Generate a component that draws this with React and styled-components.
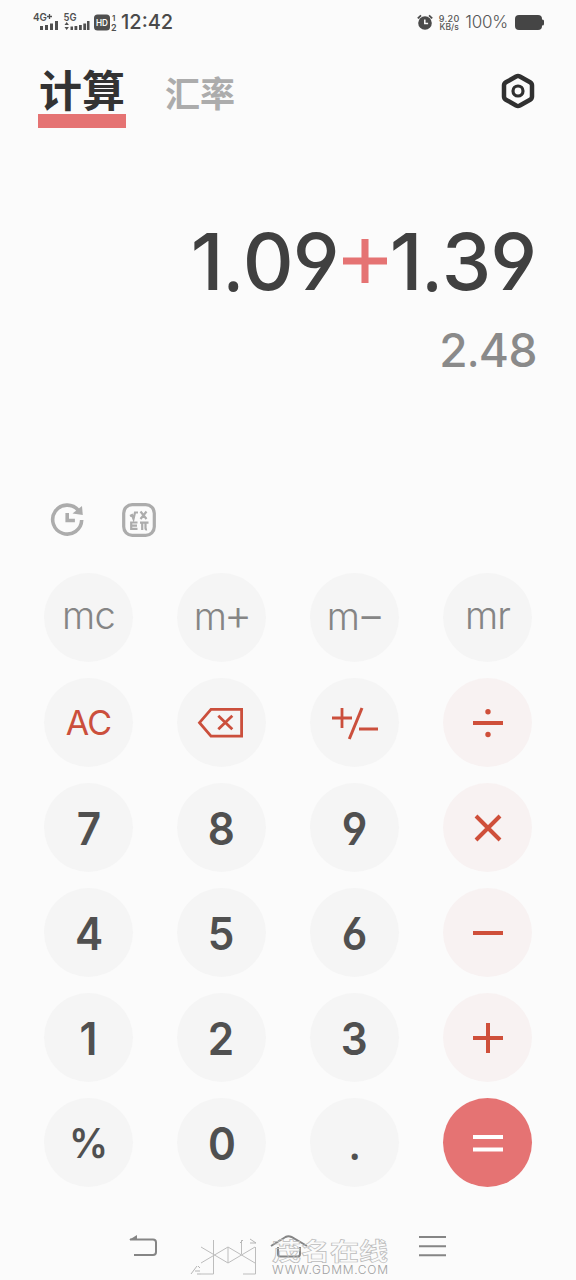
import React from 'react';
import styled, { createGlobalStyle } from 'styled-components';

const GlobalStyle = createGlobalStyle`
  * {
    box-sizing: border-box;
  }

  body {
    margin: 0;
    background-color: #fbfbfb;
  }

  button {
    padding: 0;
    border: none;
    background: none;
    font: inherit;
    color: inherit;
  }

  svg {
    display: block;
    overflow: visible;
  }
`;

const Screen = styled.div`
  display: flex;
  flex-direction: column;
  width: 576px;
  height: 1280px;
  overflow: hidden;
  font-family: Inter, "Noto Sans CJK SC", sans-serif;
  background-color: #fbfbfb;
`;

const StatusBar = styled.div`
  display: flex;
  justify-content: space-between;
  height: 44px;
  padding: 0 31px 0 33px;
`;

const StatusGroup = styled.div`
  display: flex;
  align-items: center;
  height: 44px;
`;

const Clock = styled.span`
  margin-left: 2px;
  font-size: 20px;
  font-weight: 500;
  line-height: 46px;
  color: #4a4a4a;
`;

const Speed = styled.span`
  display: flex;
  flex-direction: column;
  align-items: center;
  width: 22px;
  margin: 1px 5px 0 5px;
  font-size: 9px;
  font-weight: 500;
  line-height: 9px;
  letter-spacing: 0.3px;
  white-space: nowrap;
  color: #555;
`;

const SpeedUnit = styled.span`
  font-size: 8.5px;
  letter-spacing: 0;
`;

const Percent = styled.span`
  margin-right: 7px;
  font-size: 17px;
  font-weight: 300;
  line-height: 47px;
  letter-spacing: -0.2px;
  color: #555;
`;

const Header = styled.header`
  display: flex;
  align-items: flex-start;
  height: 166px;
  padding: 22px 41px 0 38px;
`;

const Tab = styled.button`
  height: 62px;
  margin-right: ${props => (props.$active ? '39px' : 'auto')};
  padding: ${props => (props.$active ? '1px 1px 5px' : '0 0 11px')};
  border-bottom: ${props => (props.$active ? '14px solid #e57373' : 'none')};
  font-family: "Noto Sans CJK SC", sans-serif;
  font-size: ${props => (props.$active ? '43px' : '35px')};
  font-weight: 700;
  line-height: 42px;
  color: ${props => (props.$active ? '#333' : '#acacac')};
`;

const SettingsButton = styled.button`
  margin-top: 7px;
`;

const Display = styled.section`
  display: flex;
  flex-direction: column;
  align-items: flex-end;
  height: 290px;
  padding: 11px 39px 0 0;
`;

const Expression = styled.div`
  display: flex;
  align-items: center;
  height: 80px;
  margin-right: 1px;
  font-size: 79px;
  font-weight: 450;
  font-feature-settings: "cv03", "cv04";
  line-height: 80px;
  letter-spacing: -1px;
  color: #404040;
`;

const Operator = styled.span`
  margin: 0 3px 0 4px;
`;

const Point = styled.span`
  font-family: "Noto Sans", sans-serif;
  font-weight: 400;
`;

const Result = styled.div`
  margin-top: 21px;
  font-size: 46px;
  font-weight: 450;
  line-height: 54px;
  letter-spacing: -0.5px;
  color: #8a8a8a;
`;

const Tools = styled.div`
  display: flex;
  align-items: flex-start;
  gap: 36px;
  height: 73px;
  padding: 3px 0 0 50px;
`;

const Keypad = styled.div`
  display: grid;
  grid-template-columns: repeat(4, 89px);
  grid-auto-rows: 89px;
  gap: 16px 44px;
  padding-left: 44px;
`;

const backgrounds = {
  operator: '#f8f2f2',
  equals: '#e57373',
};

const Key = styled.button`
  display: flex;
  align-items: center;
  justify-content: center;
  padding-right: ${props => props.$nudge || 0}px;
  border-radius: 50%;
  background-color: ${props => backgrounds[props.$kind] || '#f5f5f5'};
`;

const Digit = styled.span`
  font-size: 45px;
  font-weight: 600;
  font-feature-settings: "cv03", "cv04";
  line-height: 54px;
  padding-top: 2px;
  transform: scaleX(0.94);
  color: #505050;
`;

const Percentage = styled(Digit)`
  padding-top: 0;
  font-size: 41px;
  transform: scaleX(0.95);
`;

const PointKey = styled(Digit)`
  font-family: "Noto Sans", sans-serif;
  font-size: 42px;
  font-weight: 600;
`;

const Memory = styled.span`
  padding-bottom: 5px;
  font-size: 38px;
  font-weight: 300;
  line-height: 46px;
  letter-spacing: -0.8px;
  color: #858585;
`;

const MemorySign = styled.span`
  font-size: 43px;
  margin: 0 -2px;
`;

const Clear = styled.span`
  font-size: 34px;
  font-weight: 400;
  line-height: 42px;
  letter-spacing: -0.8px;
  color: #cb4f3c;
`;

const NavBar = styled.nav`
  display: flex;
  flex: 1;
  align-items: flex-start;
  padding: 47px 0 0 129px;
`;

const NavButton = styled.button`
  margin-right: ${props => props.$space || 0}px;
`;

const Watermark = styled.div`
  position: absolute;
  top: 1236px;
  left: 190px;
  display: flex;
  width: 200px;
  height: 42px;
`;

const WatermarkText = styled.div`
  width: 118px;
  margin-left: 15px;
`;

const WatermarkName = styled.div`
  width: 97px;
  height: 28px;
  font-family: "Noto Sans CJK SC", sans-serif;
  font-size: 24px;
  font-weight: 700;
  line-height: 28px;
  white-space: nowrap;
  transform: scaleX(1.21);
  transform-origin: left;
  color: transparent;
  -webkit-text-stroke: 0.7px #bcbcbc;
`;

const WatermarkUrl = styled.div`
  font-size: 12px;
  font-weight: 300;
  line-height: 12px;
  letter-spacing: 0.75px;
  white-space: nowrap;
  color: #a0a0a0;
`;

function SignalIcon() {
  return (
    <svg width="86" height="24" viewBox="0 0 86 24" fill="#4f4f4f" fontWeight="600">
      <text x="0" y="11" fontSize="10.5" textLength="14" lengthAdjust="spacingAndGlyphs">4G</text>
      <path d="M14 6.500h5M16.500 4v5" stroke="#4f4f4f" strokeWidth="1.300" />
      <path d="M7 16h3v4H7zM12 15h3v5h-3zM17 13.500h3V20h-3zM22 11h3v9h-3z" />
      <text x="30.500" y="11" fontSize="10.5" textLength="13" lengthAdjust="spacingAndGlyphs">5G</text>
      <path d="M31.500 15l2.200-3 2.200 3zM31.500 17l2.200 3 2.200-3zM37.500 16.500h2.500V20h-2.500zM41.500 16h2.800v4h-2.800zM46 15h2.800v5H46zM50.300 13.500h2.800V20h-2.800zM54 11h2.500v9H54z" />
      <rect x="61" y="4.500" width="16" height="16" rx="3.500" />
      <text x="63" y="16" fontSize="9.5" fill="#fbfbfb" textLength="12" lengthAdjust="spacingAndGlyphs">HD</text>
      <text x="79" y="10.500" fontSize="8">1</text>
      <text x="78" y="20.500" fontSize="9">2</text>
    </svg>
  );
}

function AlarmIcon() {
  return (
    <svg width="16" height="16" viewBox="0 0 16 16" fill="none" stroke="#4a4a4a">
      <circle cx="8" cy="9" r="6.800" fill="#4a4a4a" stroke="none" />
      <path d="M.8 4.300L4 1.300M15.200 4.300L12 1.300" strokeWidth="1.800" />
      <path d="M7.800 5.500v4h3.300" stroke="#fbfbfb" strokeWidth="1.500" />
    </svg>
  );
}

function BatteryIcon() {
  return (
    <svg width="30" height="15" viewBox="0 0 30 15" fill="#454545">
      <rect width="27" height="15" rx="4" />
      <rect x="26" y="4.500" width="3" height="6" rx="1.500" />
    </svg>
  );
}

function SettingsIcon() {
  return (
    <svg width="34" height="36" viewBox="0 0 34 36" fill="none" stroke="#303030">
      <path d="M15.100 3.500q1.900-1 3.800 0l10.200 5.800q1.900 1.100 1.900 3.200v11q0 2.100-1.900 3.200l-10.200 5.800q-1.900 1-3.800 0L4.900 26.700Q3 25.600 3 23.500v-11q0-2.100 1.900-3.200z" strokeWidth="4.500" />
      <circle cx="17" cy="18" r="5" strokeWidth="3.200" />
    </svg>
  );
}

function HistoryIcon() {
  return (
    <svg width="36" height="34" viewBox="0 0 36 34" fill="none" stroke="#acacac" strokeWidth="3.600">
      <path d="M28.500 7.500A14.500 14.500 0 1 0 31.700 17" />
      <path d="M17.200 10v7.500h7.700" />
      <path d="M22.500 10.500L32 3l.8 9z" fill="#acacac" stroke="none" />
    </svg>
  );
}

function FormulaIcon() {
  return (
    <svg width="34" height="34" viewBox="0 0 34 34" fill="none" stroke="#acacac">
      <rect x="1.700" y="1.700" width="30.600" height="30.600" rx="8.500" strokeWidth="3.200" />
      <path d="M8 13l2-1 1.500 4L13 9.500h3M18.500 8.500l6 7.500M24.500 8.500l-6 7.500" strokeWidth="2.200" />
      <path d="M15.500 19.500H9.200v6.300h6.300M9 22.600h6M18 19.600h8.500M20.200 20v7M23.500 20v5.500q0 1 1.500.800" strokeWidth="2.200" />
    </svg>
  );
}

function BackspaceIcon() {
  return (
    <svg width="46" height="30" viewBox="0 0 46 30" fill="none" stroke="#cb4f3c" strokeWidth="2.800">
      <path d="M14 1.400h30.600v26.700H14L2.500 14.700z" />
      <path d="M21.300 7.800l14 13.500M35.300 7.800l-14 13.500" />
    </svg>
  );
}

function SignIcon() {
  return (
    <svg width="46" height="32" viewBox="0 0 46 32" fill="none" stroke="#cb4f3c" strokeWidth="2.800">
      <path d="M0 11h20M10 1v20M27 22h19" />
      <path d="M30 1L17.300 32" strokeWidth="3" />
    </svg>
  );
}

const operatorPaths = {
  divide: 'M0 15h30',
  times: 'M3 3l24 24M27 3L3 27',
  minus: 'M0 15h30',
  plus: 'M0 15h30M15 0v30',
  equals: 'M0 9h30M0 21.500h30',
};

function OperatorIcon({ name, size = 30, weight = 4, color = '#cf4f3a' }) {
  return (
    <svg width={size} height={size} viewBox="0 0 30 30" fill="none" stroke={color} strokeWidth={weight}>
      <path d={operatorPaths[name]} />
      {name === 'divide' && (
        <g fill={color} stroke="none">
          <circle cx="15" cy="3.800" r="2.700" />
          <circle cx="15" cy="26.500" r="2.700" />
        </g>
      )}
    </svg>
  );
}

function WatermarkLogo() {
  return (
    <svg width="67" height="40" viewBox="0 0 67 40" fill="none" stroke="#bdbdbd">
      <path d="M11 11l27 16 27-16M11 27l27-16 27 16M23.500 4v34H11M38 11v16M51.500 4v14M65.500 11v27H53" />
      <path d="M1 38l6-8M8 30l2 2M5 35h5M7 38h4M50 7l3-3M60 3l6 4h-6" stroke="#b5b5b5" />
    </svg>
  );
}

const digitRows = [
  { digits: ['7', '8', '9'], operator: 'times' },
  { digits: ['4', '5', '6'], operator: 'minus' },
  { digits: ['1', '2', '3'], operator: 'plus' },
];

export default function App() {
  return (
    <Screen>
      <GlobalStyle />
      <StatusBar>
        <StatusGroup>
          <SignalIcon />
          <Clock>12:42</Clock>
        </StatusGroup>
        <StatusGroup>
          <AlarmIcon />
          <Speed>
            <span>9.20</span>
            <SpeedUnit>KB/s</SpeedUnit>
          </Speed>
          <Percent>100%</Percent>
          <BatteryIcon />
        </StatusGroup>
      </StatusBar>
      <Header>
        <Tab $active>计算</Tab>
        <Tab>汇率</Tab>
        <SettingsButton aria-label="设置">
          <SettingsIcon />
        </SettingsButton>
      </Header>
      <Display>
        <Expression>
          1<Point>.</Point>09
          <Operator>
            <OperatorIcon name="plus" size={44} weight={4.8} color="#e57373" />
          </Operator>
          1<Point>.</Point>39
        </Expression>
        <Result>2<Point>.</Point>48</Result>
      </Display>
      <Tools>
        <HistoryIcon />
        <FormulaIcon />
      </Tools>
      <Keypad>
        <Key><Memory>mc</Memory></Key>
        <Key><Memory>m<MemorySign>+</MemorySign></Memory></Key>
        <Key><Memory>m<MemorySign>−</MemorySign></Memory></Key>
        <Key><Memory>mr</Memory></Key>
        <Key><Clear>AC</Clear></Key>
        <Key $nudge={3} aria-label="删除"><BackspaceIcon /></Key>
        <Key aria-label="正负"><SignIcon /></Key>
        <Key $kind="operator"><OperatorIcon name="divide" /></Key>
        {digitRows.map(({ digits, operator }) => (
          <React.Fragment key={operator}>
            {digits.map(digit => (
              <Key key={digit}>
                <Digit>{digit}</Digit>
              </Key>
            ))}
            <Key $kind="operator"><OperatorIcon name={operator} /></Key>
          </React.Fragment>
        ))}
        <Key><Percentage>%</Percentage></Key>
        <Key><Digit>0</Digit></Key>
        <Key><PointKey>.</PointKey></Key>
        <Key $kind="equals"><OperatorIcon name="equals" color="#fff" /></Key>
      </Keypad>
      <NavBar>
        <NavButton $space={113} aria-label="返回">
          <svg width="29" height="24" viewBox="0 0 29 24" fill="none" stroke="#858585" strokeWidth="2">
            <path d="M1 5.500h23q3 0 3 3v9.500q0 3-3 3H5" />
            <path d="M0 6l8-5v5z" fill="#858585" stroke="none" />
          </svg>
        </NavButton>
        <NavButton $space={111} aria-label="主页">
          <svg width="37" height="24" viewBox="0 0 37 24" fill="none" stroke="#858585" strokeWidth="2">
            <path d="M0 12L14.500 3q3-1.500 6 0L36 12M7 13v7q0 2.500 2.500 2.500h17q2.500 0 2.500-2.500v-7" />
          </svg>
        </NavButton>
        <NavButton aria-label="菜单">
          <svg width="27" height="24" viewBox="0 0 27 24" fill="none" stroke="#858585" strokeWidth="2">
            <path d="M0 3h27M0 12.200h27M0 21.200h27" />
          </svg>
        </NavButton>
      </NavBar>
      <Watermark>
        <WatermarkLogo />
        <WatermarkText>
          <WatermarkName>茂名在线</WatermarkName>
          <WatermarkUrl>WWW.GDMM.COM</WatermarkUrl>
        </WatermarkText>
      </Watermark>
    </Screen>
  );
}
